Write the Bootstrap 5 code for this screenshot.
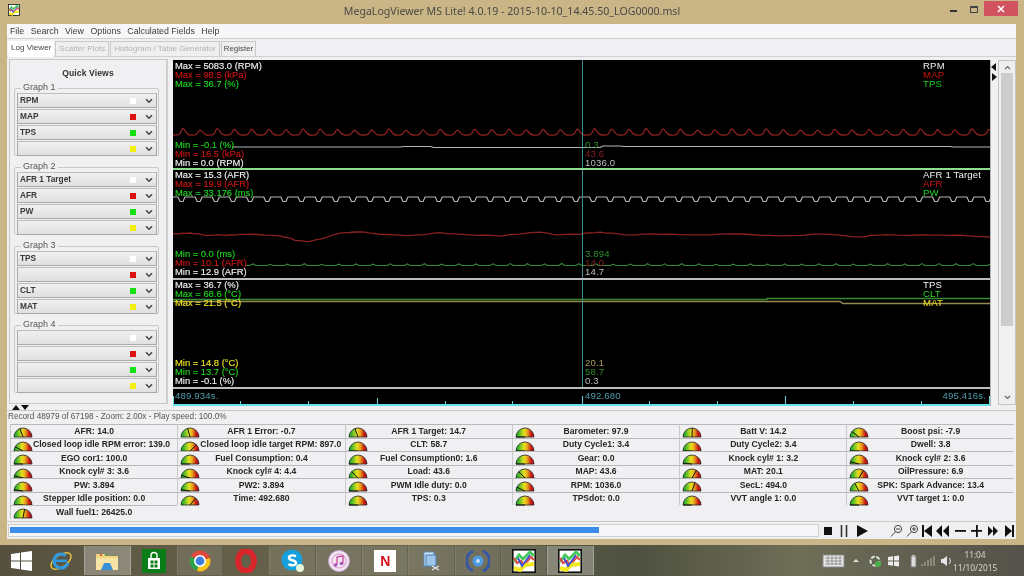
<!DOCTYPE html>
<html lang="en">
<head>
<meta charset="utf-8">
<title>MegaLogViewer MS Lite!</title>
<link href="https://cdn.jsdelivr.net/npm/bootstrap@5.3.0/dist/css/bootstrap.min.css" rel="stylesheet">
<style>
html,body{width:1024px;height:576px;overflow:hidden;margin:0;background:#5c5a45}
body{font-family:"Liberation Sans",Arial,sans-serif;font-size:9px;color:#333;line-height:1}
.shot{width:1024px;height:576px;filter:blur(.35px)}
.win{height:545px;background:#c9b585;padding:0 8px 6px 7px}
.ttl{height:24px;margin:0 -8px 0 -7px;padding:0 6px 0 8px;font-family:"Noto Sans",sans-serif;font-size:10.6px;color:#4a4a45;position:relative}
.ttl-txt{position:absolute;left:0;right:0;top:6px;text-align:center}
.wbtn{width:19px;height:15px;margin-top:1px}
.wclose{width:34px;height:15px;background:#d0535f;margin-top:1px;margin-left:1px}
.client{height:515px;background:#f0f0f3}
.menus{height:15px;background:#f7f7fa;padding-left:3px;gap:6.500px;font-size:8.8px;color:#3c3c3c;border-bottom:1px solid #cfcfcf}
.tabs{height:18px;padding:2px 0 0 1px;border-bottom:1px solid #cfcfd0;gap:1px}
.tabs .nav-link{border:1px solid #c9c9c9;border-bottom:0;border-radius:0;padding:3px 3px 0;height:15px;font-size:8.1px;color:#b3b3b3;background:#efefef;margin:0}
.tabs .nav-link.active{background:#fff;color:#444;border-color:#fff;height:16px;padding:2px 2px 0;font-size:8.1px}
.tabs .nav-link.reg{color:#444;padding:3px 2px 0;font-size:7.9px}
.mainr{height:353px;padding:3px 0 0 2px}
.side{width:159px;height:345px;margin-top:-1px;border:1px solid #c8c8c8;border-right:2px solid #cfcfcf;background:#f0f0f2;padding:0 4px;margin-right:5px;flex:none}
.qv{font-weight:700;font-size:8.6px;text-align:center;padding:9px 0 0;color:#333;height:23px;letter-spacing:.1px}
fieldset.grp{border:1px solid #c9c9c9;border-radius:2px;padding:0 2px 1px 2px;margin:0 0 6px;height:73px;width:145px}
fieldset.grp legend{float:none;width:auto;font-size:9px;margin:0 0 0 4px;padding:0 2px;line-height:9px;color:#555;height:10px}
.combo{height:15px;margin-bottom:1px;width:140px;border:1px solid #a9a9a9;border-top-color:#bdbdbd;background:linear-gradient(#f0f0f0,#e0e0e0);font-weight:700;font-size:8.3px;color:#3a3a3a;padding:0 3px 0 2px}
.swatch{width:6px;height:6px;margin-left:auto;margin-right:9px}
.bg-red{background:#e01010}.bg-grn{background:#14e014}.bg-yel{background:#f2ee10}
.charts{width:818px;height:346px;flex:none;border-right:1px solid #b5b5b5}
.charts svg{display:block}
.charts text{font-family:"Liberation Sans",Arial,sans-serif;font-size:9.4px;stroke-width:.14px}
.charts g text{stroke:currentColor}
.cw{color:#f2f2f2;fill:#f2f2f2}.cr{color:#cc1414;fill:#cc1414}.cg{color:#1fd81f;fill:#1fd81f}.cy{color:#eee222;fill:#eee222}
.charts text.rt{stroke-width:0;font-size:9.6px;letter-spacing:.15px}
.tri{width:6px;flex:none;margin-top:2px}
.sbar{width:18px;height:345px;border:1px solid #c4c4c4;background:#f0f0f0;padding:1px 2px;flex:none;margin-left:1px}
.sbtn{height:11px;background:#eee}
.sthumb{height:253px;background:#cdcdcd}
.status{height:14px;padding:2px 0 0 1px;border-top:1px solid #c6c6c6;font-size:8.2px;color:#555;position:relative}
.split{position:absolute;left:5px;top:-6px}
.ggrid{display:grid;grid-template-columns:repeat(6,167.3px);grid-auto-rows:13.5px;padding:0 0 0 3px;height:97px}
.gcell{border-top:1.5px solid #b9b9bb;border-left:1.5px solid #c9c9cb;position:relative;font-weight:700;font-size:8.6px;color:#262626;text-align:center;padding:1.500px 22px 0;white-space:nowrap}
.gcell svg{position:absolute;left:2px;top:0}
.bottom{height:18px;border-top:1px solid #c9c9c9;padding:2px 0 0 1px}
.pbar{width:811px;height:13px;border:1px solid #cfcfcf;background:#f7f7f9;border-radius:0;padding:2px 1px 3px;flex:none;--bs-progress-bar-bg:#3b8dea}
.ctl{margin-left:4px;gap:0}
.task{height:31px;background:linear-gradient(90deg,#55503f 0,#5f5a45 12%,#6a6750 40%,#4f5140 62%,#6e6e58 78%,#54524a 100%);color:#e7e7df}
.tile{width:46.3px;height:29px;flex:none;margin-top:1px;background:rgba(255,255,255,.1);border-left:1px solid rgba(255,255,255,.08);border-right:1px solid rgba(0,0,0,.15)}
.tile.on{background:rgba(255,255,255,.28);border-color:rgba(255,255,255,.25)}
.tile.bare{background:none;border:0}
.start{width:38px;flex:none}
.tray{margin-left:auto;gap:0;padding-right:27px}
.clock{font-family:"Noto Sans",sans-serif;font-size:8.3px;text-align:center;line-height:13px;width:44px;color:#d8d5c8;white-space:nowrap}
.nf{width:22px;height:22px;background:#fff;color:#d6101a;font-weight:700;font-size:14px;line-height:22px;text-align:center;font-family:"Liberation Sans",sans-serif}
</style>
</head>
<body>
<svg width="0" height="0" class="position-absolute">
<defs>
<linearGradient id="gg" x1="0" x2="1" y1="0" y2="0"><stop offset=".1" stop-color="#27b12a"/><stop offset=".45" stop-color="#e7e01f"/><stop offset=".62" stop-color="#e8a81c"/><stop offset=".85" stop-color="#c81414"/></linearGradient>
<symbol id="g" viewBox="0 0 20 13"><path d="M1 12 A9 9 0 0 1 19 12 Z" fill="url(#gg)" stroke="#222" stroke-width=".8"/></symbol>
<symbol id="mlv" viewBox="0 0 24 24"><rect x=".8" y=".8" width="22.400" height="22.400" fill="#fff" stroke="#111" stroke-width="1.600"/><path d="M2 13 7 6 11 10 18 3 22 7" fill="none" stroke="#46c95a" stroke-width="3"/><path d="M2 9 5 14 9 12 12 16 19 8 22 11" fill="none" stroke="#e2504a" stroke-width="2.200"/><path d="M2 19 8 21 13 16 22 15" fill="none" stroke="#f3e71f" stroke-width="4"/><path d="M6 9 10 17 18 6" fill="none" stroke="#3a4fd8" stroke-width="1.800"/></symbol>
<symbol id="chev" viewBox="0 0 8 6"><path d="M1 1.200 4 4.200 7 1.200" fill="none" stroke="#444" stroke-width="1.500"/></symbol>
</defs>
</svg>
<div class="shot">
<div class="win">
  <div class="ttl d-flex align-items-start">
    <svg width="12" height="12" class="mt-1 mb-0"><use href="#mlv"/></svg>
    <div class="ttl-txt">MegaLogViewer MS Lite! 4.0.19 - 2015-10-10_14.45.50_LOG0000.msl</div>
    <div class="ms-auto d-flex">
      <svg class="wbtn" viewBox="0 0 19 15"><rect x="5" y="9" width="7" height="2" fill="#333"/></svg>
      <svg class="wbtn" viewBox="0 0 19 15"><rect x="6.500" y="5.500" width="7" height="6" fill="none" stroke="#444"/><rect x="6" y="5" width="8" height="2" fill="#444"/></svg>
      <div class="wclose d-flex align-items-center justify-content-center"><svg width="8" height="8" viewBox="0 0 8 8"><path d="M1 1 7 7M7 1 1 7" stroke="#fff" stroke-width="1.500"/></svg></div>
    </div>
  </div>
  <div class="client">
    <div class="menus d-flex align-items-center"><span>File</span><span>Search</span><span>View</span><span>Options</span><span>Calculated Fields</span><span>Help</span></div>
    <ul class="nav tabs">
      <li class="nav-item"><a class="nav-link active" href="#">Log Viewer</a></li>
      <li class="nav-item"><a class="nav-link" href="#">Scatter Plots</a></li>
      <li class="nav-item"><a class="nav-link" href="#">Histogram / Table Generator</a></li>
      <li class="nav-item"><a class="nav-link reg" href="#">Register</a></li>
    </ul>
    <div class="mainr d-flex">
      <div class="side">
        <div class="qv">Quick Views</div>
        <fieldset class="grp"><legend>Graph 1</legend>
          <div class="combo d-flex align-items-center"><span>RPM</span><i class="swatch bg-white"></i><svg width="8" height="6"><use href="#chev"/></svg></div>
          <div class="combo d-flex align-items-center"><span>MAP</span><i class="swatch bg-red"></i><svg width="8" height="6"><use href="#chev"/></svg></div>
          <div class="combo d-flex align-items-center"><span>TPS</span><i class="swatch bg-grn"></i><svg width="8" height="6"><use href="#chev"/></svg></div>
          <div class="combo d-flex align-items-center"><span></span><i class="swatch bg-yel"></i><svg width="8" height="6"><use href="#chev"/></svg></div>
        </fieldset>
        <fieldset class="grp"><legend>Graph 2</legend>
          <div class="combo d-flex align-items-center"><span>AFR 1 Target</span><i class="swatch bg-white"></i><svg width="8" height="6"><use href="#chev"/></svg></div>
          <div class="combo d-flex align-items-center"><span>AFR</span><i class="swatch bg-red"></i><svg width="8" height="6"><use href="#chev"/></svg></div>
          <div class="combo d-flex align-items-center"><span>PW</span><i class="swatch bg-grn"></i><svg width="8" height="6"><use href="#chev"/></svg></div>
          <div class="combo d-flex align-items-center"><span></span><i class="swatch bg-yel"></i><svg width="8" height="6"><use href="#chev"/></svg></div>
        </fieldset>
        <fieldset class="grp"><legend>Graph 3</legend>
          <div class="combo d-flex align-items-center"><span>TPS</span><i class="swatch bg-white"></i><svg width="8" height="6"><use href="#chev"/></svg></div>
          <div class="combo d-flex align-items-center"><span></span><i class="swatch bg-red"></i><svg width="8" height="6"><use href="#chev"/></svg></div>
          <div class="combo d-flex align-items-center"><span>CLT</span><i class="swatch bg-grn"></i><svg width="8" height="6"><use href="#chev"/></svg></div>
          <div class="combo d-flex align-items-center"><span>MAT</span><i class="swatch bg-yel"></i><svg width="8" height="6"><use href="#chev"/></svg></div>
        </fieldset>
        <fieldset class="grp"><legend>Graph 4</legend>
          <div class="combo d-flex align-items-center"><span></span><i class="swatch bg-white"></i><svg width="8" height="6"><use href="#chev"/></svg></div>
          <div class="combo d-flex align-items-center"><span></span><i class="swatch bg-red"></i><svg width="8" height="6"><use href="#chev"/></svg></div>
          <div class="combo d-flex align-items-center"><span></span><i class="swatch bg-grn"></i><svg width="8" height="6"><use href="#chev"/></svg></div>
          <div class="combo d-flex align-items-center"><span></span><i class="swatch bg-yel"></i><svg width="8" height="6"><use href="#chev"/></svg></div>
        </fieldset>
      </div>
      <div class="charts">
        <svg width="817" height="110" viewBox="173 60 817 110" style="background:#000">
          <path id="t-map" fill="none" stroke="#8a2020" stroke-width="1.300"/>
          <path id="t-rpm" fill="none" stroke="#b4b4b4" stroke-width="1.200"/>
          <line x1="582.500" x2="582.500" y1="60" y2="170" stroke="#3f8e96"/>
          <g class="cw"><text x="175" y="69">Max = 5083.0 (RPM)</text><text x="175" y="166">Min = 0.0 (RPM)</text><text class="rt" x="923" y="69">RPM</text></g>
          <g class="cr"><text x="175" y="78">Max = 98.5 (kPa)</text><text x="175" y="157">Min = 16.5 (kPa)</text><text class="rt" x="923" y="78">MAP</text></g>
          <g class="cg"><text x="175" y="87">Max = 36.7 (%)</text><text x="175" y="148">Min = -0.1 (%)</text><text class="rt" x="923" y="87">TPS</text></g>
          <text x="585" y="148" fill="#2f8f2f" class="rt">0.3</text><text x="585" y="157" fill="#8a2020" class="rt">43.6</text><text x="585" y="166" fill="#bdbdbd" class="rt">1036.0</text>
          <rect x="173" y="168" width="817" height="2" fill="#8fdc8f"/>
        </svg>
        <svg width="817" height="110" viewBox="173 170 817 110" style="background:#000">
          <path id="t-tgt" fill="none" stroke="#b4b4b4" stroke-width="1.200"/>
          <path id="t-afr" fill="none" stroke="#8a2020" stroke-width="1.300"/>
          <path id="t-pw" fill="none" stroke="#358a35" stroke-width="1.200"/>
          <line x1="582.500" x2="582.500" y1="170" y2="280" stroke="#3f8e96"/>
          <g class="cw"><text x="175" y="178">Max = 15.3 (AFR)</text><text x="175" y="275">Min = 12.9 (AFR)</text><text class="rt" x="923" y="178">AFR 1 Target</text></g>
          <g class="cr"><text x="175" y="187">Max = 19.9 (AFR)</text><text x="175" y="266">Min = 10.1 (AFR)</text><text class="rt" x="923" y="187">AFR</text></g>
          <g class="cg"><text x="175" y="196">Max = 33.176 (ms)</text><text x="175" y="257">Min = 0.0 (ms)</text><text class="rt" x="923" y="196">PW</text></g>
          <text x="585" y="257" fill="#2f8f2f" class="rt">3.894</text><text x="585" y="266" fill="#8a2020" class="rt">14.0</text><text x="585" y="275" fill="#bdbdbd" class="rt">14.7</text>
          <rect x="173" y="278" width="817" height="2" fill="#bdbdbd"/>
        </svg>
        <svg width="817" height="109" viewBox="173 280 817 109" style="background:#000">
          <path d="M173 299.500H767V298.500H990" fill="none" stroke="#358a35" stroke-width="1.300"/>
          <path d="M173 301.500H840L843 303.500H990" fill="none" stroke="#968c52" stroke-width="1.300"/>
          <line x1="582.500" x2="582.500" y1="280" y2="389" stroke="#3f8e96"/>
          <g class="cw"><text x="175" y="288">Max = 36.7 (%)</text><text x="175" y="384">Min = -0.1 (%)</text><text class="rt" x="923" y="288">TPS</text></g>
          <g class="cg"><text x="175" y="297">Max = 68.6 (°C)</text><text x="175" y="375">Min = 13.7 (°C)</text><text class="rt" x="923" y="297">CLT</text></g>
          <g class="cy"><text x="175" y="306">Max = 21.5 (°C)</text><text x="175" y="366">Min = 14.8 (°C)</text><text class="rt" x="923" y="306">MAT</text></g>
          <text x="585" y="366" fill="#a89a5a" class="rt">20.1</text><text x="585" y="375" fill="#2f8f2f" class="rt">58.7</text><text x="585" y="384" fill="#bdbdbd" class="rt">0.3</text>
          <rect x="173" y="387" width="817" height="2" fill="#bdbdbd"/>
        </svg>
        <svg width="817" height="17" viewBox="173 389 817 17" style="background:#000">
          <g fill="#4e9ca8"><text class="rt" x="175" y="399">489.934s.</text><text class="rt" x="585" y="399">492.680</text><text class="rt" x="986" y="399" text-anchor="end">495.416s.</text></g>
          <path d="M173.500 396V404M240.500 401V404M308.500 401V404M377.500 398V404M445.500 401V404M512.500 401V404M582.500 396V404M649.500 401V404M717.500 401V404M785.500 396V404M853.500 401V404M921.500 401V404M989.500 396V404" stroke="#5fdde0"/>
          <rect x="173" y="404" width="817" height="2" fill="#62e2e6"/>
        </svg>
      </div>
      <svg class="tri" height="21" viewBox="0 0 6 21"><path d="M5 1V9L0 5Z M1 11V19L6 15Z" fill="#111"/></svg>
      <div class="sbar d-flex flex-column">
        <div class="sbtn d-flex align-items-center justify-content-center"><svg width="7" height="5" viewBox="0 0 7 5"><path d="M1 4 3.500 1.500 6 4" fill="none" stroke="#666" stroke-width="1.200"/></svg></div>
        <div class="sthumb"></div>
        <div class="mt-auto sbtn d-flex align-items-center justify-content-center"><svg width="7" height="5" viewBox="0 0 7 5"><path d="M1 1 3.500 3.500 6 1" fill="none" stroke="#666" stroke-width="1.200"/></svg></div>
      </div>
    </div>
    <div class="status"><svg class="split" width="18" height="5" viewBox="0 0 18 5"><path d="M0 5 4 0 8 5ZM9 0H17L13 5Z" fill="#111"/></svg>Record 48979 of 67198 - Zoom: 2.00x - Play speed: 100.0%</div>
    <div class="ggrid" id="gauges">
      <div class="gcell" data-n="70">AFR: 14.0</div><div class="gcell" data-n="75">AFR 1 Error: -0.7</div><div class="gcell" data-n="70">AFR 1 Target: 14.7</div><div class="gcell" data-n="0">Barometer: 97.9</div><div class="gcell" data-n="92">Batt V: 14.2</div><div class="gcell" data-n="38">Boost psi: -7.9</div>
      <div class="gcell" data-n="28">Closed loop idle RPM error: 139.0</div><div class="gcell" data-n="135">Closed loop idle target RPM: 897.0</div><div class="gcell" data-n="0">CLT: 58.7</div><div class="gcell" data-n="0">Duty Cycle1: 3.4</div><div class="gcell" data-n="0">Duty Cycle2: 3.4</div><div class="gcell" data-n="0">Dwell: 3.8</div>
      <div class="gcell" data-n="0">EGO cor1: 100.0</div><div class="gcell" data-n="0">Fuel Consumption: 0.4</div><div class="gcell" data-n="0">Fuel Consumption0: 1.6</div><div class="gcell" data-n="0">Gear: 0.0</div><div class="gcell" data-n="6">Knock cyl# 1: 3.2</div><div class="gcell" data-n="14">Knock cyl# 2: 3.6</div>
      <div class="gcell" data-n="14">Knock cyl# 3: 3.6</div><div class="gcell" data-n="18">Knock cyl# 4: 4.4</div><div class="gcell" data-n="45">Load: 43.6</div><div class="gcell" data-n="45">MAP: 43.6</div><div class="gcell" data-n="120">MAT: 20.1</div><div class="gcell" data-n="120">OilPressure: 6.9</div>
      <div class="gcell" data-n="8">PW: 3.894</div><div class="gcell" data-n="8">PW2: 3.894</div><div class="gcell" data-n="0">PWM Idle duty: 0.0</div><div class="gcell" data-n="25">RPM: 1036.0</div><div class="gcell" data-n="110">SecL: 494.0</div><div class="gcell" data-n="60">SPK: Spark Advance: 13.4</div>
      <div class="gcell" data-n="0">Stepper Idle position: 0.0</div><div class="gcell" data-n="130">Time: 492.680</div><div class="gcell" data-n="0">TPS: 0.3</div><div class="gcell" data-n="0">TPSdot: 0.0</div><div class="gcell" data-n="0">VVT angle 1: 0.0</div><div class="gcell" data-n="0">VVT target 1: 0.0</div>
      <div class="gcell" data-n="100">Wall fuel1: 26425.0</div>
    </div>
    <div class="bottom d-flex align-items-start">
      <div class="progress pbar"><div class="progress-bar" style="width:73%"></div></div>
      <svg class="ctl" width="192" height="14" viewBox="823 525 192 14">
        <rect x="824" y="528" width="8" height="8" fill="#111"/>
        <path d="M841.500 526V538M846.500 526V538" stroke="#333" stroke-width="1.600"/>
        <path d="M857 526 868 532 857 538Z" fill="#111"/>
        <g fill="none" stroke="#444"><circle cx="898" cy="530" r="3.600"/><path d="M895.400 532.800 891 537.500M896 530H900"/><circle cx="914" cy="530" r="3.600"/><path d="M911.400 532.800 907 537.500M912 530H916M914 528V532"/></g>
        <path d="M922 526H924V538H922ZM932 526V538L924 532Z" fill="#111"/>
        <path d="M942 526V538L936 532ZM949 526V538L943 532Z" fill="#111"/>
        <rect x="955" y="531" width="11" height="1.800" fill="#111"/>
        <path d="M971 531H976V526H977.800V531H982V532.800H977.800V538H976V532.800H971Z" fill="#111"/>
        <path d="M988 527V537L993 532ZM993 527V537L998 532Z" fill="#111"/>
        <path d="M1005 526V538L1012 532ZM1012 526H1014V538H1012Z" fill="#111"/>
      </svg>
    </div>
  </div>
</div>
<div class="task d-flex align-items-start">
  <div class="start d-flex justify-content-center align-items-center ps-1 h-100"><svg width="21" height="20" viewBox="0 0 21 20"><path d="M0 3 9 1.800V9.500H0ZM10 1.600 21 0V9.500H10ZM0 10.500H9V18.200L0 17ZM10 10.500H21V20L10 18.400Z" fill="#fff"/></svg></div>
  <div class="tile bare d-flex align-items-center justify-content-center"><svg width="24" height="24" viewBox="0 0 24 24"><ellipse cx="12" cy="12" rx="11.500" ry="6" fill="none" stroke="#e8c23a" stroke-width="1.400" transform="rotate(-35 12 12)"/><circle cx="12" cy="12" r="7" fill="none" stroke="#2f9ae0" stroke-width="3.200" stroke-dasharray="36 8" transform="rotate(15 12 12)"/><rect x="6" y="10.500" width="12" height="2.600" fill="#2f9ae0"/></svg></div>
  <div class="tile on d-flex align-items-center justify-content-center"><svg width="24" height="22" viewBox="0 0 24 22"><path d="M1 4H9L11 6H23V20H1Z" fill="#f2d47a"/><rect x="1" y="8" width="22" height="12" fill="#f8e5a5"/><path d="M6 20 9 13H15L18 20Z" fill="#3d8fd8"/><circle cx="6" cy="5" r="1" fill="#d33"/><circle cx="11" cy="5" r="1" fill="#3a3"/></svg></div>
  <div class="tile bare d-flex align-items-center justify-content-center"><svg width="24" height="24" viewBox="0 0 24 24"><rect width="24" height="24" fill="#0a7d16"/><path d="M6 9H18V20H6Z" fill="#fff"/><path d="M9 9V6.500A3 3 0 0 1 15 6.500V9" fill="none" stroke="#fff" stroke-width="1.400"/><path d="M8.500 11.500H11.500V14.500H8.500ZM12.500 11.500H15.500V14.500H12.500ZM8.500 15.500H11.500V18.500H8.500ZM12.500 15.500H15.500V18.500H12.500Z" fill="#0a7d16"/></svg></div>
  <div class="tile d-flex align-items-center justify-content-center"><svg width="22" height="22" viewBox="0 0 22 22"><circle cx="11" cy="11" r="10.500" fill="#dd4b3e"/><path d="M11 11 1.600 6.300A10.500 10.500 0 0 0 8 21Z" fill="#2ea24b"/><path d="M11 11 21 8A10.500 10.500 0 0 1 8 21Z" fill="#f5c518"/><circle cx="11" cy="11" r="5.200" fill="#3d7ee0" stroke="#fff" stroke-width="1.600"/></svg></div>
  <div class="tile bare d-flex align-items-center justify-content-center"><svg width="22" height="24" viewBox="0 0 22 24"><ellipse cx="11" cy="12" rx="8" ry="10" fill="none" stroke="#d8262c" stroke-width="6"/></svg></div>
  <div class="tile d-flex align-items-center justify-content-center"><svg width="24" height="24" viewBox="0 0 24 24"><circle cx="11" cy="11" r="10.500" fill="#16a0dc"/><path d="M15 7.500C12 5.500 7.500 6.500 8 9C8.500 12 15 10.500 15 14C15 16.500 10 17 7.500 15" fill="none" stroke="#fff" stroke-width="2.400"/><circle cx="19" cy="19" r="4" fill="#e6f5d8"/></svg></div>
  <div class="tile d-flex align-items-center justify-content-center"><svg width="22" height="22" viewBox="0 0 22 22"><circle cx="11" cy="11" r="10.500" fill="#f0e6f2" stroke="#c9a4d4"/><circle cx="11" cy="11" r="7" fill="none" stroke="#d97ac0" stroke-width=".8"/><path d="M9 15V7L15 5.800V13.500" fill="none" stroke="#c84a9a" stroke-width="1.300"/><circle cx="7.500" cy="15" r="1.800" fill="#a857b8"/><circle cx="13.500" cy="13.500" r="1.800" fill="#a857b8"/></svg></div>
  <div class="tile d-flex align-items-center justify-content-center"><div class="nf">N</div></div>
  <div class="tile d-flex align-items-center justify-content-center"><svg width="18" height="20" viewBox="0 0 18 20"><rect x="1" y="1" width="10" height="14" fill="#cfe3f5" stroke="#5b8dc0"/><rect x="3" y="4" width="10" height="11" fill="#9cc6ea" stroke="#4f7fb5"/><path d="M9 15 16 19M9 19 16 15" stroke="#e8e8e8" stroke-width="1.200"/></svg></div>
  <div class="tile d-flex align-items-center justify-content-center"><svg width="24" height="26" viewBox="0 0 24 26"><path d="M7 3A11 11 0 0 0 7 23" fill="none" stroke="#3557a8" stroke-width="3"/><path d="M17 3A11 11 0 0 1 17 23" fill="none" stroke="#3557a8" stroke-width="3"/><circle cx="12" cy="13" r="5.500" fill="#4f9be0"/><circle cx="12" cy="13" r="2" fill="#bfe2ff"/></svg></div>
  <div class="tile d-flex align-items-center justify-content-center"><svg width="24" height="24"><use href="#mlv"/></svg></div>
  <div class="tile on d-flex align-items-center justify-content-center"><svg width="24" height="24"><use href="#mlv"/></svg></div>
  <div class="tray d-flex align-items-center h-100">
    <svg width="134" height="22" viewBox="0 0 134 22">
      <rect x="4" y="5" width="21" height="12" fill="#e8e8e8" stroke="#888"/><path d="M6 8H23M6 11H23M6 14H23M9 6V15M13 6V15M17 6V15M21 6V15" stroke="#777" stroke-width=".7"/>
      <path d="M34 12 37 9 40 12Z" fill="#ddd"/>
      <circle cx="56" cy="11" r="4.500" fill="none" stroke="#d8e6d0" stroke-width="2" stroke-dasharray="4 1.500"/><circle cx="59" cy="14" r="3" fill="#49b04a"/>
      <path d="M69 7 74 6.300V10.500H69ZM75 6.200 80 5.500V10.500H75ZM69 11.500H74V15.700L69 15ZM75 11.500H80V16.500L75 15.800Z" fill="#eee"/>
      <rect x="92" y="6" width="5" height="11" fill="#ddd" stroke="#777"/><rect x="93.500" y="4.800" width="2" height="1.400" fill="#ddd"/>
      <path d="M102 16H104V14H102ZM105 16H107V12H105ZM108 16H110V10H108ZM111 16H113V8H111ZM114 16H116V6H114Z" fill="#8b8b78"/>
      <path d="M122 9H124L128 6V16L124 13H122Z" fill="#e6e6e6"/><path d="M130 8A4 4 0 0 1 130 14" fill="none" stroke="#e6e6e6"/>
    </svg>
    <div class="clock">11:04<br>11/10/2015</div>
  </div>
</div>
</div>
<script src="https://cdn.jsdelivr.net/npm/bootstrap@5.3.0/dist/js/bootstrap.bundle.min.js"></script>
<script>
(function(){
  var P=17.15,a,d,x;
  function rnd(i){var s=Math.sin(i*12.9898)*43758.5453;return s-Math.floor(s)}
  d='M173 135';
  for(x=173,a=0;x<990;x+=P,a++){var h=128.5+rnd(a)*1.8;d+='C'+(x+3)+' 135 '+(x+4)+' 136 '+(x+6.5)+' 134S'+(x+8)+' '+h+' '+(x+10)+' '+h+'S'+(x+13)+' 135 '+(x+P)+' 135';}
  document.getElementById('t-map').setAttribute('d',d);
  d='M232 147H400L404 146.5H430L434 147.500H445H500H585H600L603 146H620L624 146.500H640H800H885L889 146.500H950L953 147H990';
  document.getElementById('t-rpm').setAttribute('d',d);
  d='M173 197';
  for(x=173;x<990;x+=P){d+='H'+(x+5)+'L'+(x+7)+' 201.5H'+(x+10)+'L'+(x+12)+' 197H'+(x+P);}
  document.getElementById('t-tgt').setAttribute('d',d);
  var pts=[[173,234],[190,233],[205,235],[230,235],[250,234],[280,236],[295,240],[306,241.5],[320,239],[340,233],[360,232],[380,234],[410,236],[440,233],[470,235],[500,236],[540,232],[555,235],[580,234],[600,232],[625,235],[660,234],[700,235],[740,234],[780,236],[825,234],[860,237],[875,235],[920,235],[960,235],[990,237]];
  d='';
  for(var i=0;i<pts.length-1;i++){var A=pts[i],B=pts[i+1];for(var k=0;k<4;k++){var t=k/4;d+=(d?'L':'M')+(A[0]+(B[0]-A[0])*t).toFixed(1)+' '+(A[1]+(B[1]-A[1])*t+(rnd(i*5+k)-.5)*.8).toFixed(1);}}
  document.getElementById('t-afr').setAttribute('d',d+'L990 237');
  d='M245 265.500';
  for(x=245,a=0;x<990;x+=P,a++){d+='H'+(x+5)+'L'+(x+8)+' '+(263.5+rnd(a+9)*.8)+'L'+(x+11)+' 265.500H'+(x+P);}
  document.getElementById('t-pw').setAttribute('d',d);
  document.querySelectorAll('.gcell').forEach(function(c){
    var n=+c.dataset.n,r=Math.PI*n/180,nx=10-9*Math.cos(r),ny=12-9*Math.sin(r);
    c.insertAdjacentHTML('afterbegin','<svg width="20" height="13" viewBox="0 0 20 13"><use href="#g"/><line x1="10" y1="12" x2="'+nx.toFixed(1)+'" y2="'+ny.toFixed(1)+'" stroke="#111" stroke-width="1"/></svg>');
  });
})();
</script>
</body>
</html>
